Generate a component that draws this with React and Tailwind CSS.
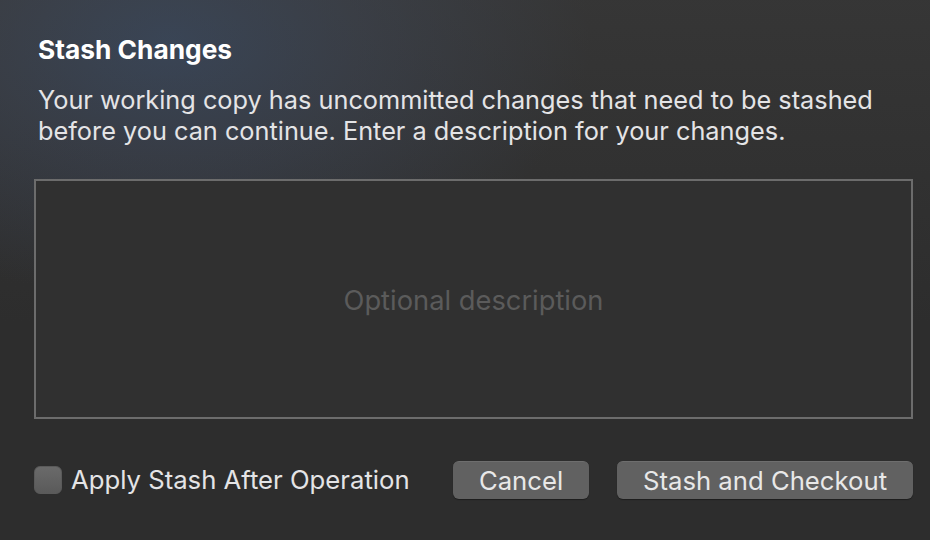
import React, { useState } from "react";

export default function App() {
  const [applyAfter, setApplyAfter] = useState(false);
  const [description, setDescription] = useState("");

  return (
    <div
      className="relative w-[930px] h-[540px] overflow-hidden bg-[#2d2d2d] text-[#e6e6e6]"
      style={{ fontFamily: "Inter, 'Noto Sans', sans-serif" }}
    >
      {/* blue glow behind the title */}
      <div className="absolute inset-0 bg-[radial-gradient(ellipse_420px_260px_at_170px_40px,#34445c_0%,#343a45_45%,rgba(45,45,45,0)_100%)]"></div>
      <div className="absolute inset-0 bg-[linear-gradient(180deg,rgba(70,70,70,0.35)_0%,rgba(45,45,45,0)_60%)]"></div>

      <div className="relative flex flex-col h-full pl-[34px] pr-[17px]">
        <h2 className="pl-[4px] pt-[35px] text-[26.3px] leading-[30px] font-bold text-white">
          Stash Changes
        </h2>

        <p className="pl-[4px] mt-[19px] text-[25.3px] leading-[31px] text-[#e4e4e6]">
          Your working copy has uncommitted changes that need to be stashed
          <br />
          before you can continue. Enter a description for your changes.
        </p>

        <div className="mt-[33px] h-[240px] border-2 border-[#6c6c6c] bg-[#303030]">
          <textarea
            value={description}
            onChange={(e) => setDescription(e.target.value)}
            placeholder="Optional description"
            className="w-full h-full resize-none bg-transparent outline-none text-center pt-[104px] text-[27.3px] leading-[32px] text-[#e6e6e6] placeholder:text-[#5b5b5b]"
          />
        </div>

        <div className="mt-[42px] flex items-center">
          <label className="flex items-center cursor-pointer">
            <span
              onClick={() => setApplyAfter(!applyAfter)}
              className="w-[28px] h-[28px] rounded-[6px] border border-[#5a5a5a] bg-[linear-gradient(180deg,#6a6a6a,#5a5a5a)] flex items-center justify-center"
            >
              {applyAfter && (
                <svg width="18" height="18" viewBox="0 0 18 18">
                  <path d="M3.5 9.5l3.5 3.5 7.5-8" fill="none" stroke="#fff" strokeWidth="2.5" strokeLinecap="round" strokeLinejoin="round" />
                </svg>
              )}
            </span>
            <span className="ml-[9px] text-[25.7px] leading-[30px] text-[#e4e4e6]">
              Apply Stash After Operation
            </span>
          </label>

          <div className="ml-auto flex gap-[28px]">
            <button className="w-[136px] h-[38px] rounded-[6px] bg-[#616161] border-t border-[#6e6e6e] text-[25.7px] text-[#e8e8e8] shadow-[0_1px_1px_rgba(0,0,0,0.35)]">
              Cancel
            </button>
            <button className="w-[296px] h-[38px] rounded-[6px] bg-[#616161] border-t border-[#6e6e6e] text-[25.7px] text-[#e8e8e8] shadow-[0_1px_1px_rgba(0,0,0,0.35)]">
              Stash and Checkout
            </button>
          </div>
        </div>
      </div>
    </div>
  );
}
